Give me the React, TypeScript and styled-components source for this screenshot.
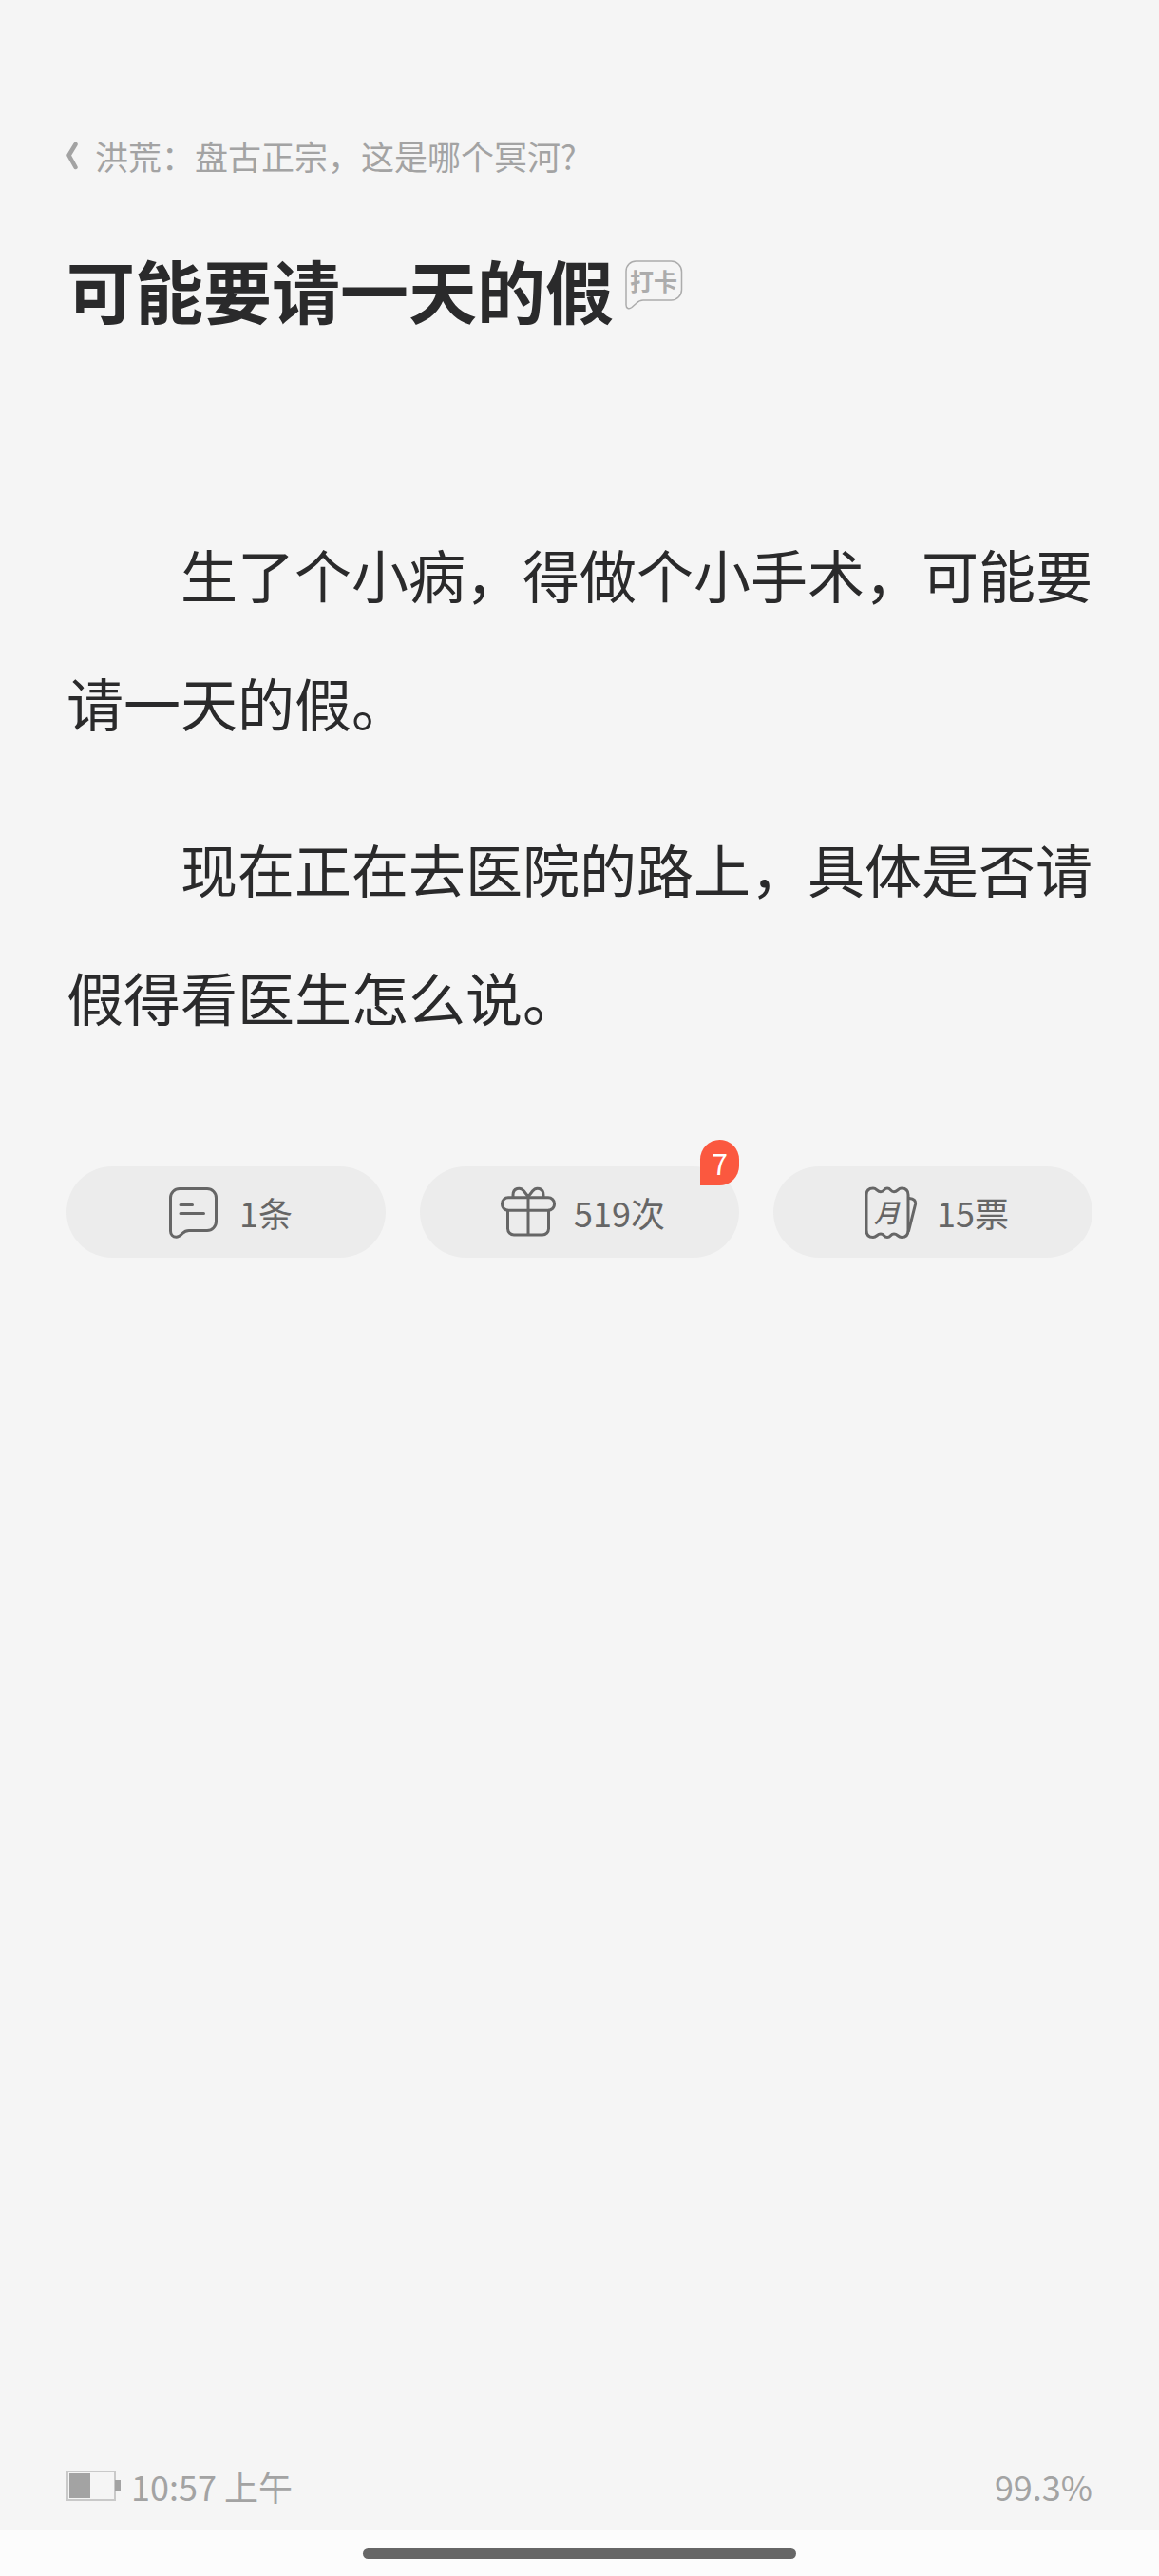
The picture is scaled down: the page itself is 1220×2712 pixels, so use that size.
import React from "react";
import styled, { createGlobalStyle } from "styled-components";

const GlobalStyle = createGlobalStyle`
  * { box-sizing: border-box; }
  body {
    margin: 0;
    background: #f5f5f5;
    font-family: "Noto Sans CJK SC", sans-serif;
    color: #2a2a2b;
  }
  button { font: inherit; border: 0; margin: 0; padding: 0; background: none; color: inherit; }
`;

const Page = styled.div`
  min-height: 100vh;
  display: flex;
  flex-direction: column;
`;

const Reader = styled.main`
  flex: 1;
  display: flex;
  flex-direction: column;
  padding: 140px 70px 0;
`;

const BackLink = styled.a`
  display: flex;
  align-items: center;
  gap: 18px;
  color: #a3a3a3;
  font-size: 35px;
  line-height: 48px;
  text-decoration: none;
`;

const TitleRow = styled.div`
  display: flex;
  align-items: flex-start;
  gap: 12px;
  margin-top: 68px;
`;

const Title = styled.h1`
  margin: 0;
  font-size: 72px;
  line-height: 96px;
  font-weight: 700;
`;

const CheckIn = styled.button`
  margin-top: 18px;
  height: 54px;
  line-height: 0;
`;

const Article = styled.article`
  margin-top: 184px;
`;

const Paragraph = styled.p`
  margin: 0 0 40px;
  font-size: 60px;
  line-height: 135px;
  text-indent: 2em;
`;

const Actions = styled.div`
  display: grid;
  grid-template-columns: repeat(3, 1fr);
  gap: 36px;
  margin-top: 72px;
`;

const Pill = styled.button`
  position: relative;
  display: flex;
  align-items: center;
  justify-content: center;
  gap: 12px;
  height: 96px;
  border-radius: 48px;
  background: #ececec;
  color: #666;
  font-size: 36px;
  line-height: 48px;
`;

const Count = styled.span`
  position: absolute;
  top: -28px;
  right: 0;
  width: 41px;
  height: 48px;
  border-radius: 21px 21px 21px 0;
  background: #fb583f;
  color: #fff;
  font-size: 30px;
  line-height: 48px;
  text-align: center;
`;

const StatusBar = styled.footer`
  display: flex;
  align-items: center;
  gap: 10px;
  height: 94px;
  padding: 0 70px;
  color: #a3a3a3;
  font-size: 36px;
  line-height: 48px;
`;

const Progress = styled.span`
  margin-left: auto;
`;

const HomeArea = styled.div`
  display: flex;
  align-items: center;
  justify-content: center;
  height: 48px;
  background: #fcfcfc;
`;

const HomeBar = styled.div`
  width: 456px;
  height: 11px;
  border-radius: 6px;
  background: #666;
`;

const ChevronIcon = () => (
  <svg width="12" height="30" viewBox="0 0 12 30" fill="none" stroke="#a3a3a3" strokeWidth="4.5" strokeLinecap="round" strokeLinejoin="round">
    <path d="M9.5 3 2.5 14.5l7 12.5" />
  </svg>
);

const CheckInIcon = () => (
  <svg width="62" height="54" viewBox="0 0 62 54">
    <path
      d="M11.5 1H48.5A11 11 0 0 1 59.5 12V31A11 11 0 0 1 48.5 42H19C15.5 42 13.5 43.5 11.5 45.5L7 49.5C4 52 1 50.5 1 47V11.5A10.5 10.5 0 0 1 11.5 1Z"
      fill="none"
      stroke="#acacac"
      strokeWidth="1.5"
    />
    <text x="5" y="32" fontSize="25" fontWeight="700" fill="#acacac">打卡</text>
  </svg>
);

const stroke = { fill: "none", stroke: "#666", strokeWidth: 3, strokeLinecap: "round", strokeLinejoin: "round" } as const;

const CommentIcon = () => (
  <svg width="72" height="72" viewBox="0 0 72 72" {...stroke}>
    <path d="M21 11.5H50A9.5 9.5 0 0 1 59.5 21V46A9.5 9.5 0 0 1 50 55.5H31C28 55.5 26 56.5 24 58.5C22 60.5 20.5 62.3 17.5 62.3C14 62.3 11.5 59.5 11.5 56V21A9.5 9.5 0 0 1 21 11.5Z" />
    <path d="M22 28.5H34.5M22 37.5H46.5" />
  </svg>
);

const GiftIcon = () => (
  <svg width="72" height="72" viewBox="0 0 72 72" {...stroke}>
    <rect x="8.5" y="20.7" width="55" height="13.6" rx="6.5" />
    <path d="M14.5 34.3V53.5A6.5 6.5 0 0 0 21 60H51A6.5 6.5 0 0 0 57.5 53.5V34.3M36 20.7V60" />
    <path d="M20 20.5V18C20 11 27.5 9 31.5 14L36 19.8L40.5 14C44.5 9 52 11 52 18V20.5" />
  </svg>
);

const TicketIcon = () => (
  <svg width="72" height="72" viewBox="0 0 72 72" {...stroke}>
    <path d="M10 18Q10 11 17 11C21 11 21 14.7 25 14.7C29 14.7 28 11 32 11C36 11 35 14.7 39 14.7C43 14.7 43 11 47 11Q54 11 54 18V55Q54 62.5 47 62.5C43 62.5 43 59 39 59C35 59 36 62.5 32 62.5C28 62.5 29 59 25 59C21 59 21 62.5 17 62.5Q10 62.5 10 55Z" />
    <path d="M55 21.5Q62.5 22 61.5 28L54.5 56" />
    <text x="18" y="47" fontSize="27" fontWeight="500" fontStyle="italic" fill="#666" stroke="none">月</text>
  </svg>
);

const BatteryIcon = () => (
  <svg width="58" height="32" viewBox="0 0 58 32">
    <rect x="1" y="1" width="50" height="30" fill="none" stroke="#c9c9c9" strokeWidth="2" />
    <path d="M3 3H25V29H3ZM51 10H57V22H51Z" fill="#a3a3a3" />
  </svg>
);

export default function App() {
  return (
    <Page>
      <GlobalStyle />
      <Reader>
        <BackLink href="#">
          <ChevronIcon />
          洪荒：盘古正宗，这是哪个冥河?
        </BackLink>
        <TitleRow>
          <Title>可能要请一天的假</Title>
          <CheckIn aria-label="打卡"><CheckInIcon /></CheckIn>
        </TitleRow>
        <Article>
          <Paragraph>生了个小病，得做个小手术，可能要请一天的假。</Paragraph>
          <Paragraph>现在正在去医院的路上，具体是否请假得看医生怎么说。</Paragraph>
        </Article>
        <Actions>
          <Pill><CommentIcon />1条</Pill>
          <Pill><GiftIcon />519次<Count>7</Count></Pill>
          <Pill><TicketIcon />15票</Pill>
        </Actions>
      </Reader>
      <StatusBar>
        <BatteryIcon />
        <span>10:57 上午</span>
        <Progress>99.3%</Progress>
      </StatusBar>
      <HomeArea><HomeBar /></HomeArea>
    </Page>
  );
}
